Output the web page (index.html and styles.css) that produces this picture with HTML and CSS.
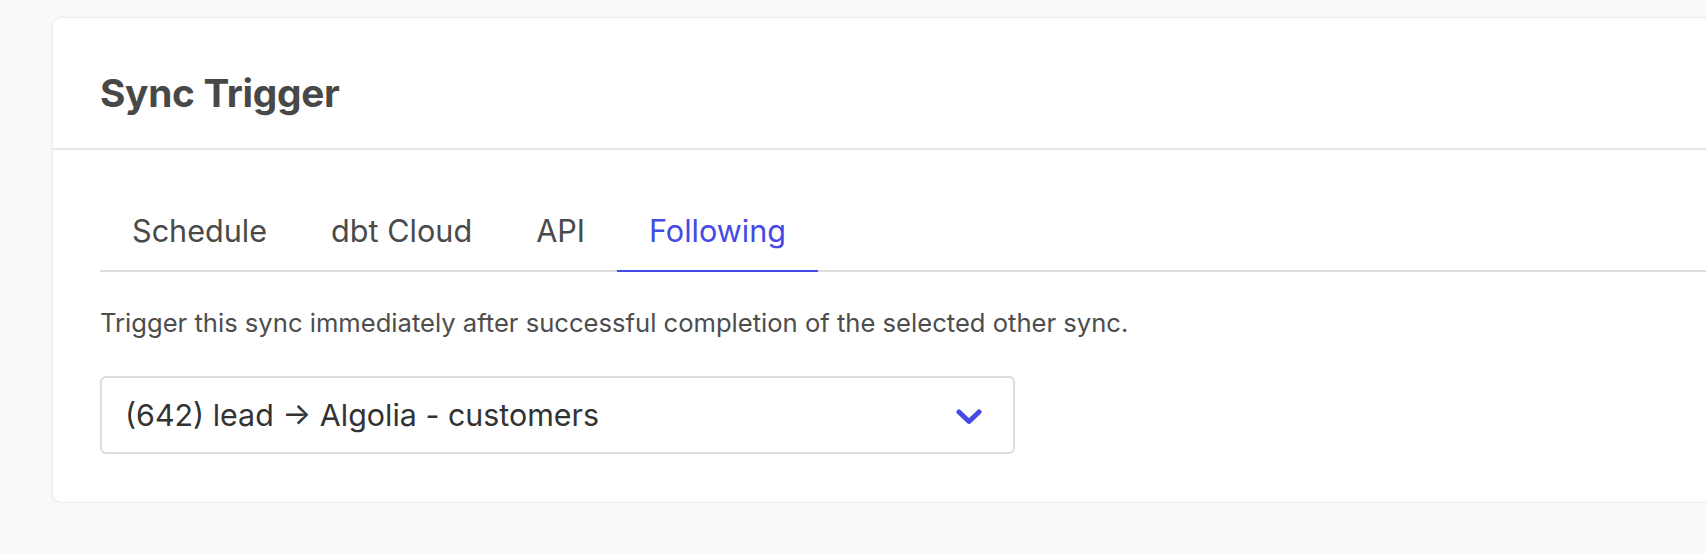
FILE: index.html
```html
<!DOCTYPE html>
<html lang="en">
<head>
<meta charset="utf-8">
<title>Sync Trigger</title>
<link rel="stylesheet" href="styles.css">
</head>
<body>
<main class="page">
  <section class="card">
    <header class="card-header">
      <h2 class="card-title">Sync Trigger</h2>
    </header>
    <div class="card-body">
      <nav class="tabs">
        <span class="tab">Schedule</span>
        <span class="tab">dbt Cloud</span>
        <span class="tab">API</span>
        <span class="tab tab-active">Following</span>
      </nav>
      <p class="desc">Trigger this sync immediately after successful completion of the selected other sync.</p>
      <div class="select">
        <span class="select-value">(642) lead → Algolia - customers</span>
        <svg class="chevron" width="26" height="16" viewBox="0 0 26 16" aria-hidden="true">
          <polyline points="3,3 13,12.5 23,3" fill="none" stroke="#4649e5" stroke-width="5" stroke-linecap="round" stroke-linejoin="round"/>
        </svg>
      </div>
    </div>
  </section>
</main>
</body>
</html>
```

FILE: styles.css
```css
html, body {
  margin: 0;
  padding: 0;
  background: #f8f9fb;
  overflow: hidden;
}

body {
  font-family: Inter, "Liberation Sans", Arial, sans-serif;
  color: #4a4a4a;
}

.page {
  padding: 17px 0 0 52px;
  width: 1800px;
}

.card {
  width: 1720px;
  background: #ffffff;
  border: 1px solid #eceef1;
  border-radius: 10px;
  box-shadow: 0 1px 4px rgba(0, 0, 0, 0.05);
  padding-bottom: 48px;
}

.card-header {
  padding: 51px 0 31px 47px;
  border-bottom: 2px solid #e6e6e6;
}

.card-title {
  margin: 0;
  font-size: 38.8px;
  line-height: 48px;
  font-weight: 700;
  color: #484848;
  letter-spacing: -0.3px;
}

.card-body {
  padding: 61px 0 0 47px;
}

.tabs {
  display: flex;
  border-bottom: 2px solid #dcdcdc;
}

.tab {
  padding: 0 32px 19px;
  font-size: 30.6px;
  line-height: 40px;
  color: #4a4a4a;
  border-bottom: 2px solid transparent;
  margin-bottom: -2px;
}

.tab-active {
  color: #4649e5;
  border-bottom-color: #4649e5;
}

.desc {
  margin: 35px 0 0;
  font-size: 25.6px;
  line-height: 32px;
  color: #4d4d4d;
}

.select {
  margin-top: 37px;
  height: 74px;
  border: 2px solid #dcdcdc;
  border-radius: 6px;
  display: flex;
  align-items: center;
  justify-content: space-between;
  padding: 0 31px 0 23px;
  box-sizing: content-box;
  width: 857px;
}

.select-value {
  font-size: 30.4px;
  line-height: 36px;
  color: #333333;
}

.chevron {
  display: block;
  margin-top: 4px;
}
```
